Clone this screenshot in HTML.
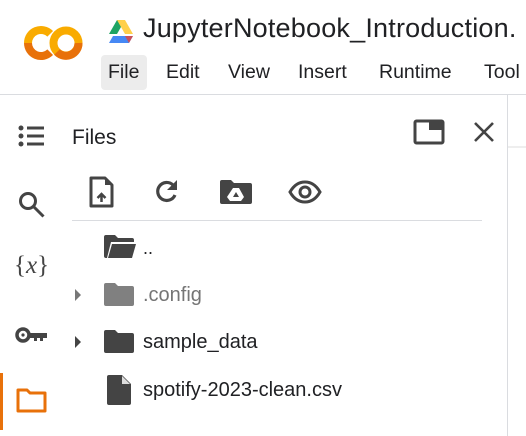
<!DOCTYPE html>
<html><head><style>
body{margin:0;width:526px;height:436px;background:#fff;position:relative;overflow:hidden;font-family:"Liberation Sans",Arial,sans-serif;color:#202124}
.a{position:absolute;white-space:nowrap}
</style></head><body>
<svg class="a" style="left:22px;top:24px" width="62" height="38" viewBox="0 0 62 38">
<path d="M19 19m-13 0a13 13 0 0 1 22.2-9.2" fill="none" stroke="#F9AB00" stroke-width="8"/>
<path d="M6 19a13 13 0 0 0 22.2 9.2" fill="none" stroke="#E8710A" stroke-width="8"/>
<circle cx="44" cy="19" r="12.5" fill="none" stroke="#F9AB00" stroke-width="8"/>
<path d="M35 28a12.5 12.5 0 0 0 21.5-9" fill="none" stroke="#E8710A" stroke-width="8"/>
</svg>
<svg class="a" style="left:108px;top:20px" width="26" height="23" viewBox="0 0 26 23">
<path d="M9 0h8l-8 14H1z" fill="#1FA463"/><path d="M17 0l8 14h-8L9 0z" fill="#FFD04B"/>
<path d="M5 16h20l-4 7H1z" fill="#4688F4"/><path d="M17 16h8l-4 7z" fill="#EA4335" opacity=".8"/>
</svg>
<div class="a" style="left:143px;top:13px;font-size:27px;letter-spacing:0.2px">JupyterNotebook_Introduction.</div>
<div class="a" style="left:101px;top:55px;width:46px;height:35px;background:#ececec;border-radius:4px"></div>
<div class="a" style="left:108px;top:61px;font-size:19.5px">File</div>
<div class="a" style="left:166px;top:61px;font-size:19.5px">Edit</div>
<div class="a" style="left:228px;top:61px;font-size:19.5px">View</div>
<div class="a" style="left:298px;top:61px;font-size:19.5px">Insert</div>
<div class="a" style="left:379px;top:61px;font-size:19.5px">Runtime</div>
<div class="a" style="left:484px;top:61px;font-size:19.5px">Tool</div>
<div class="a" style="left:0;top:94px;width:526px;height:1px;background:#dadce0"></div>
<div class="a" style="left:507px;top:95px;width:1px;height:341px;background:#dadce0"></div>
<div class="a" style="left:508px;top:146px;width:18px;height:2px;background:#eee"></div>
<svg class="a" style="left:18px;top:125px" width="28" height="24" viewBox="0 0 28 24" fill="#444">
<circle cx="3" cy="3" r="2.5"/><circle cx="3" cy="11" r="2.5"/><circle cx="3" cy="19" r="2.5"/>
<rect x="9" y="1.5" width="17" height="3"/><rect x="9" y="9.5" width="17" height="3"/><rect x="9" y="17.5" width="17" height="3"/></svg>
<svg class="a" style="left:17px;top:190px" width="30" height="30" viewBox="0 0 30 30"><circle cx="11" cy="11" r="7.5" fill="none" stroke="#444" stroke-width="3"/><path d="M16.5 16.5l10 10" stroke="#444" stroke-width="3"/></svg>
<div class="a" style="left:14px;top:252px;font-size:25px;color:#444;font-family:'Liberation Serif',serif"><span>{</span><i>x</i><span>}</span></div>
<svg class="a" style="left:15px;top:326px" width="34" height="18" viewBox="0 0 34 18"><circle cx="8" cy="9" r="6" fill="none" stroke="#444" stroke-width="3.5"/><circle cx="8" cy="9" r="1.6" fill="#444"/><path d="M13 7h19v5h-4v3h-3v-3h-3v3h-3v-3h-6z" fill="#444"/></svg>
<div class="a" style="left:0;top:373px;width:3px;height:57px;background:#E8710A"></div>
<svg class="a" style="left:16px;top:388px" width="32" height="26" viewBox="0 0 32 26"><path d="M2 2h9l3 3h15v18H2z" fill="none" stroke="#E8710A" stroke-width="3" stroke-linejoin="round"/></svg>
<div class="a" style="left:72px;top:126px;font-size:21px">Files</div>
<svg class="a" style="left:413px;top:119px" width="32" height="26" viewBox="0 0 32 26"><rect x="2" y="2" width="28" height="22" rx="1.5" fill="none" stroke="#444" stroke-width="3"/><rect x="16" y="2" width="14" height="9" fill="#444"/></svg>
<svg class="a" style="left:472px;top:120px" width="24" height="24" viewBox="0 0 24 24"><path d="M3 3l18 18M21 3L3 21" stroke="#444" stroke-width="2.6"/></svg>
<svg class="a" style="left:89px;top:176px" width="26" height="32" viewBox="0 0 26 32"><path d="M2 2h14l7 7v21H2z" fill="none" stroke="#444" stroke-width="3" stroke-linejoin="round"/><path d="M16 2v7h7" fill="#444"/><path d="M12.5 26v-7M8.5 22l4-4 4 4" stroke="#444" stroke-width="2.5" fill="none"/></svg>
<svg class="a" style="left:153px;top:178px" width="28" height="28" viewBox="0 0 28 28"><path d="M22 17a9 9 0 1 1-2-10" fill="none" stroke="#444" stroke-width="3.2"/><path d="M24 2v10h-10z" fill="#444"/></svg>
<svg class="a" style="left:220px;top:180px" width="32" height="24" viewBox="0 0 32 24"><path d="M0 2a2 2 0 0 1 2-2h9l3 3h16a2 2 0 0 1 2 2v17a2 2 0 0 1-2 2H2a2 2 0 0 1-2-2z" fill="#444"/><path d="M13 8h6l5 9-3 4H10l-3-4z" fill="#fff"/><path d="M16 12l3 5h-6z" fill="#444"/></svg>
<svg class="a" style="left:288px;top:180px" width="34" height="24" viewBox="0 0 34 24"><path d="M2 12C6 5 11 2 17 2s11 3 15 10c-4 7-9 10-15 10S6 19 2 12z" fill="none" stroke="#444" stroke-width="3"/><circle cx="17" cy="12" r="5" fill="none" stroke="#444" stroke-width="3"/></svg>
<div class="a" style="left:72px;top:220px;width:410px;height:1px;background:#dadce0"></div>
<svg class="a" style="left:104px;top:234px" width="32" height="24" viewBox="0 0 32 24"><path d="M0 3a2 2 0 0 1 2-2h9l3 3h14a2 2 0 0 1 2 2v2H7l-4 16H2a2 2 0 0 1-2-2z" fill="#444"/><path d="M8 10h24l-4 14H4z" fill="#444"/></svg>
<div class="a" style="left:143px;top:238px;font-size:18px">..</div>
<svg class="a" style="left:74px;top:288px" width="8" height="14"><path d="M1 1l6 6-6 6z" fill="#777"/></svg>
<svg class="a" style="left:104px;top:282px" width="30" height="24" viewBox="0 0 30 24"><path d="M0 3a2 2 0 0 1 2-2h9l3 3h14a2 2 0 0 1 2 2v16a2 2 0 0 1-2 2H2a2 2 0 0 1-2-2z" fill="#808080"/></svg>
<div class="a" style="left:143px;top:284px;font-size:20px;color:#757575">.config</div>
<svg class="a" style="left:74px;top:335px" width="8" height="14"><path d="M1 1l6 6-6 6z" fill="#444"/></svg>
<svg class="a" style="left:104px;top:329px" width="30" height="24" viewBox="0 0 30 24"><path d="M0 3a2 2 0 0 1 2-2h9l3 3h14a2 2 0 0 1 2 2v16a2 2 0 0 1-2 2H2a2 2 0 0 1-2-2z" fill="#444"/></svg>
<div class="a" style="left:143px;top:331px;font-size:20px">sample_data</div>
<svg class="a" style="left:107px;top:375px" width="24" height="30" viewBox="0 0 24 30"><path d="M2 0h13l9 9v19a2 2 0 0 1-2 2H2a2 2 0 0 1-2-2V2a2 2 0 0 1 2-2z" fill="#444"/><path d="M15 1l8 8h-8z" fill="#ddd"/></svg>
<div class="a" style="left:143px;top:379px;font-size:20px">spotify-2023-clean.csv</div>
</body></html>
